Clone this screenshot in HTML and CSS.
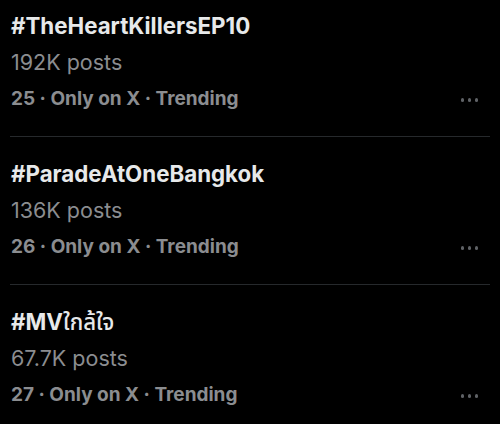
FILE: index.html
```html
<!DOCTYPE html>
<html>
<head>
<meta charset="utf-8">
<link rel="stylesheet" href="styles.css">
</head>
<body>
<ul class="trends">
  <li class="trend">
    <div class="text">
      <div class="tag">#TheHeartKillersEP10</div>
      <div class="posts">192K posts</div>
      <div class="meta">25 · Only on X · Trending</div>
    </div>
    <div class="more"><span></span><span></span><span></span></div>
  </li>
  <li class="trend">
    <div class="text">
      <div class="tag">#ParadeAtOneBangkok</div>
      <div class="posts">136K posts</div>
      <div class="meta">26 · Only on X · Trending</div>
    </div>
    <div class="more"><span></span><span></span><span></span></div>
  </li>
  <li class="trend">
    <div class="text">
      <div class="tag">#MV<span class="thai">ใกล้ใจ</span></div>
      <div class="posts">67.7K posts</div>
      <div class="meta">27 · Only on X · Trending</div>
    </div>
    <div class="more"><span></span><span></span><span></span></div>
  </li>
</ul>
</body>
</html>
```
FILE: styles.css
```css
html, body {
  margin: 0;
  padding: 0;
  background: #000;
}
body {
  width: 500px;
  height: 424px;
  overflow: hidden;
  font-family: Inter, "Noto Sans", "Noto Sans Thai", sans-serif;
}
.trends {
  list-style: none;
  margin: 0;
  padding: 0 10px 0 10px;
}
.trend {
  display: flex;
  justify-content: space-between;
  align-items: flex-start;
  padding: 19px 0 18px 1px;
  border-bottom: 1px solid #26292c;
}
.trend:first-child {
  padding-top: 8px;
}
.tag {
  color: #e7e9ea;
  font-size: 22.3px;
  font-weight: 700;
  line-height: 36px;
}
.thai {
  font-weight: 500;
}
.posts {
  color: #8b8d90;
  font-size: 21.5px;
  font-weight: 400;
  line-height: 36px;
}
.meta {
  color: #8b8d90;
  font-size: 19px;
  font-weight: 700;
  line-height: 38px;
}
.more {
  display: flex;
  gap: 3.5px;
  margin-top: 90px;
  margin-right: 12px;
}
.more span {
  width: 3.5px;
  height: 3.5px;
  border-radius: 50%;
  background: #5f6266;
}
```
